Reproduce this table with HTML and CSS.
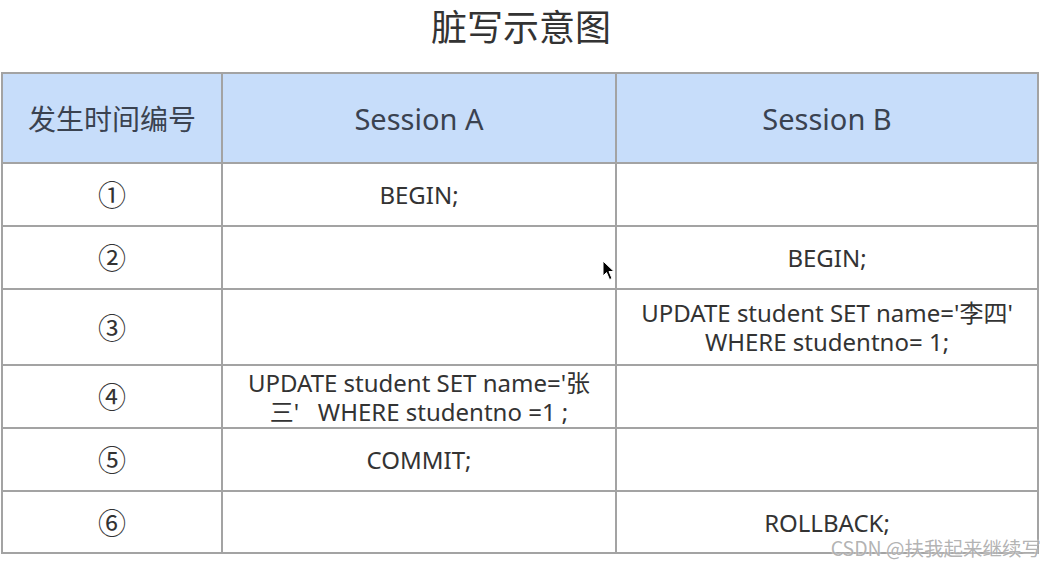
FILE: index.html
```html
<!DOCTYPE html>
<html lang="zh-CN">
<head>
<meta charset="utf-8">
<title>脏写示意图</title>
<link rel="stylesheet" href="styles.css">
</head>
<body>
<div class="page">
  <h1 class="title">脏写示意图</h1>
  <div class="grid">
    <div class="cell head">发生时间编号</div>
    <div class="cell head latin">Session A</div>
    <div class="cell head latin">Session B</div>

    <div class="cell num">①</div>
    <div class="cell">BEGIN;</div>
    <div class="cell"></div>

    <div class="cell num">②</div>
    <div class="cell"></div>
    <div class="cell">BEGIN;</div>

    <div class="cell num">③</div>
    <div class="cell"></div>
    <div class="cell stack"><span class="line">UPDATE student SET name='李四'</span><span class="line">WHERE studentno= 1;</span></div>

    <div class="cell num">④</div>
    <div class="cell stack"><span class="line">UPDATE student SET name='张</span><span class="line">三'&nbsp;&nbsp; WHERE studentno =1 ;</span></div>
    <div class="cell"></div>

    <div class="cell num">⑤</div>
    <div class="cell">COMMIT;</div>
    <div class="cell"></div>

    <div class="cell num">⑥</div>
    <div class="cell"></div>
    <div class="cell">ROLLBACK;</div>
  </div>
  <svg class="cursor" width="13" height="21" viewBox="0 0 13 21"><path d="M1 1 L1 16 L4.5 12.5 L7.5 19.5 L10 18.5 L7 11.5 L12 11.5 Z" fill="#000" stroke="#fff" stroke-width="1"/></svg>
  <div class="watermark">CSDN @扶我起来继续写</div>
</div>
</body>
</html>
```
FILE: styles.css
```css
html, body {
  margin: 0;
  padding: 0;
  background: #fff;
}
.page {
  position: relative;
  width: 1042px;
  height: 569px;
  overflow: hidden;
  font-family: "Noto Sans", "Noto Sans CJK SC", sans-serif;
  color: #333;
}
.title {
  margin: 0;
  height: 72px;
  padding-top: 0;
  box-sizing: border-box;
  text-align: center;
  font-family: "Noto Sans CJK SC", sans-serif;
  font-weight: 400;
  font-size: 36px;
  line-height: 50px;
  color: #333;
}
.grid {
  margin-left: 1px;
  width: 1038px;
  box-sizing: border-box;
  display: grid;
  grid-template-columns: 218px 392px 420px;
  grid-template-rows: 88px 61px 61px 74px 61px 61px 60px;
  gap: 2px;
  padding: 2px;
  background: #a3a3a3;
}
.cell {
  background: #fff;
  display: flex;
  align-items: center;
  justify-content: center;
  text-align: center;
  font-size: 24px;
  line-height: 29px;
  color: #333;
}
.stack {
  flex-direction: column;
}
.line {
  display: block;
  height: 29px;
  line-height: 29px;
  white-space: nowrap;
}
.head {
  background: #c7ddfa;
  font-size: 28px;
  color: #3a4250;
  font-family: "Noto Sans CJK SC", sans-serif;
}
.head.latin {
  font-family: "Noto Sans", sans-serif;
  font-size: 29px;
}
.num {
  font-family: "Noto Sans CJK SC", sans-serif;
  font-size: 28px;
}
.cursor {
  position: absolute;
  left: 602px;
  top: 260px;
}
.watermark {
  position: absolute;
  right: 1px;
  top: 535px;
  font-family: "Noto Sans CJK SC", sans-serif;
  font-size: 19.5px;
  line-height: 26px;
  color: rgba(160, 160, 160, 0.8);
  text-shadow: 0 0 2px #fff;
}
```
